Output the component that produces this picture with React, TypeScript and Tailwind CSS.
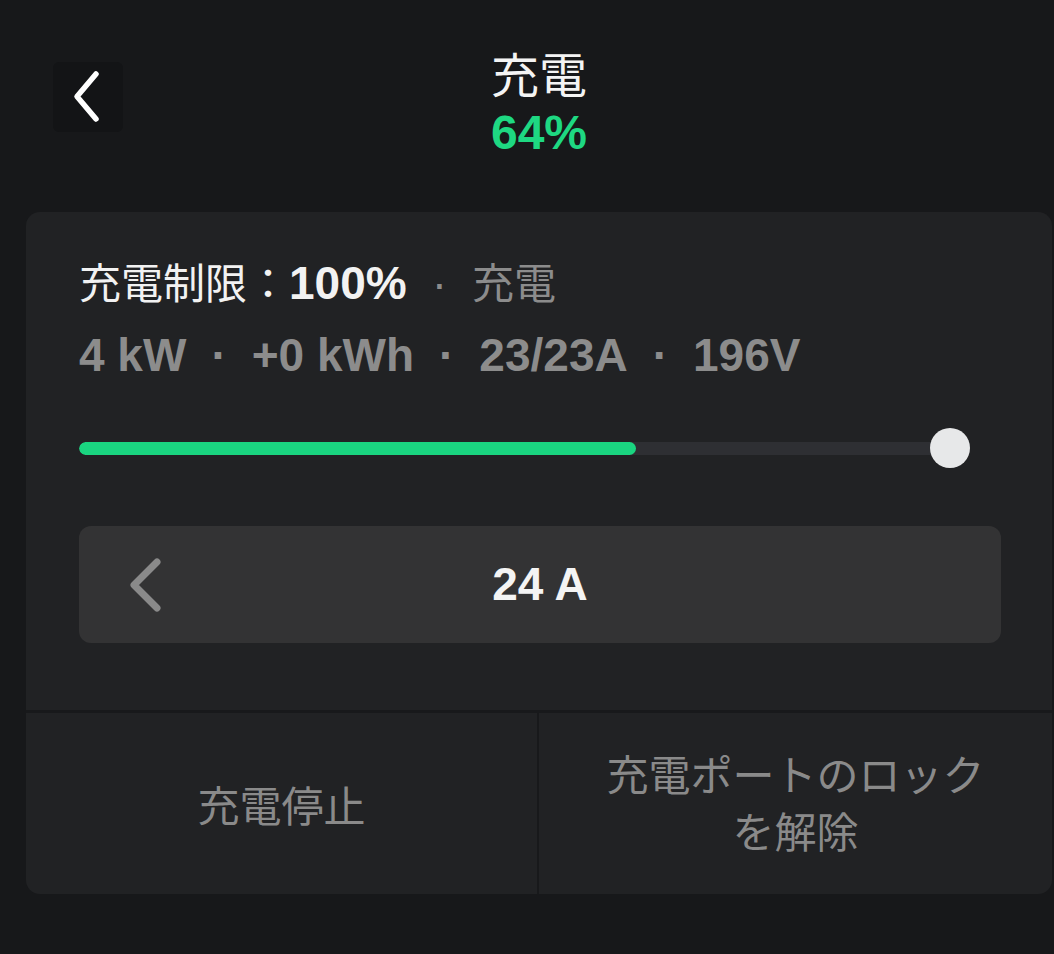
const FONT = { fontFamily: '"Liberation Sans", "Noto Sans CJK JP", sans-serif' };
const CJK = { fontFamily: '"Noto Sans CJK JP", sans-serif' };

function Dot() {
  return <span className="mx-[25px]">·</span>;
}

export default function App() {
  return (
    <div
      className="min-h-screen w-[1054px] bg-[#17181a] text-white pt-[42px]"
      style={FONT}
    >
      {/* Header */}
      <div className="ml-[26px] w-[1026px] grid grid-cols-[1fr_auto_1fr] items-start">
        <div className="pl-[27px] pt-[20px]">
          <button className="flex h-[70px] w-[70px] items-center justify-center rounded-[6px] bg-[#131416]">
            <svg width="40" height="56" viewBox="0 0 40 56" fill="none">
              <path
                d="M28 5 L9 27.5 L28 50"
                stroke="#ffffff"
                strokeWidth="5.5"
                strokeLinecap="round"
                strokeLinejoin="round"
              />
            </svg>
          </button>
        </div>
        <div className="flex flex-col items-center">
          <div className="text-[48px] leading-[60px] font-normal text-[#f4f4f4]" style={CJK}>
            充電
          </div>
          <div className="text-[48px] leading-[62px] font-bold text-[#1ed882]">
            64%
          </div>
        </div>
        <div />
      </div>

      {/* Card */}
      <div className="mt-[48px] ml-[26px] w-[1026px] overflow-hidden rounded-[14px] bg-[#212224]">
        <div className="px-[53px] pt-[33px] pb-[67px] pr-[51px]">
          <div className="flex items-baseline text-[46px] leading-[72px] whitespace-nowrap">
            <span className="text-[42px] text-[#f2f2f2]" style={CJK}>
              充電制限：
            </span>
            <span className="font-bold text-[#f2f2f2]">100%</span>
            <span className="text-[#8c8c8c]">
              <Dot />
            </span>
            <span className="text-[42px] text-[#8c8c8c]" style={CJK}>
              充電
            </span>
          </div>
          <div className="text-[46px] leading-[72px] font-bold text-[#8c8c8c] whitespace-nowrap">
            4 kW<Dot />+0 kWh<Dot />23/23A<Dot />196V
          </div>

          {/* Slider */}
          <div className="relative mt-[37px] mr-[31px] flex h-[40px] items-center">
            <div className="mr-[20px] h-[13px] flex-1 overflow-hidden rounded-full bg-[#2e2f33]">
              <div className="h-full rounded-full bg-[#1ad580]" style={{ width: "64%" }} />
            </div>
            <div className="absolute right-0 top-0 h-[40px] w-[40px] rounded-full bg-[#e7e8e9]" />
          </div>

          {/* Stepper */}
          <div className="mt-[58px] grid h-[117px] grid-cols-[1fr_auto_1fr] items-center rounded-[12px] bg-[#333334]">
            <div className="pl-[49px]">
              <svg width="36" height="54" viewBox="0 0 36 54" fill="none">
                <path
                  d="M29 4 L6 27 L29 50"
                  stroke="#8a8a8a"
                  strokeWidth="7"
                  strokeLinecap="round"
                  strokeLinejoin="round"
                />
              </svg>
            </div>
            <div className="text-[46px] font-bold text-[#f4f4f4]">24 A</div>
            <div />
          </div>
        </div>

        {/* Actions */}
        <div
          className="grid h-[184px] grid-cols-2 border-t-[3px] border-[#18191b] text-[42px] leading-[57px] text-[#8a8a8a]"
          style={CJK}
        >
          <button className="flex items-center justify-center border-r-[2px] border-[#18191b]">
            充電停止
          </button>
          <button className="flex items-center justify-center pb-[6px] text-center">
            充電ポートのロック
            <br />
            を解除
          </button>
        </div>
      </div>
    </div>
  );
}
